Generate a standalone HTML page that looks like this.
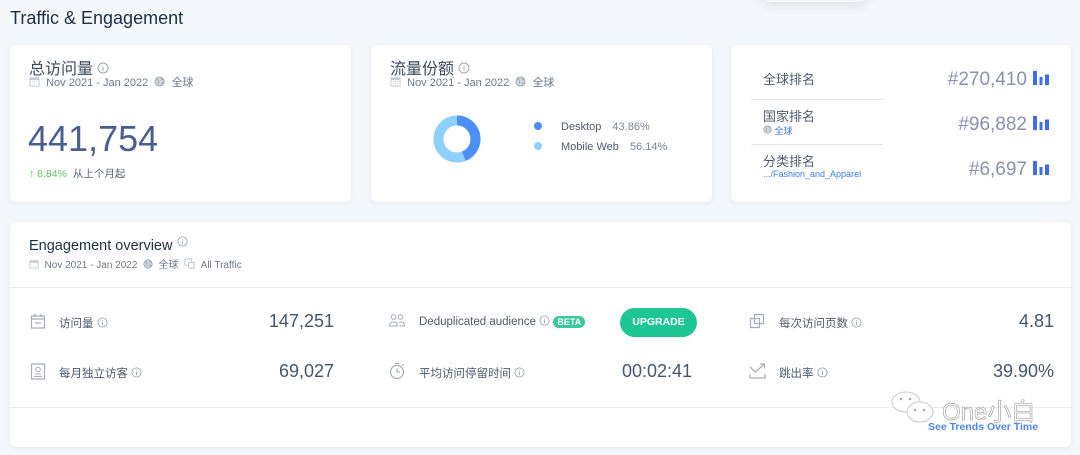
<!DOCTYPE html>
<html><head><meta charset="utf-8">
<style>
*{margin:0;padding:0;box-sizing:border-box}
body{width:1080px;height:455px;background:#f4f7fb;font-family:"Liberation Sans","Noto Sans CJK SC",sans-serif;position:relative;overflow:hidden;color:#2a3e52}
.a{position:absolute;white-space:nowrap}
.card{position:absolute;background:#fff;border-radius:6px;box-shadow:0 1px 4px rgba(40,60,90,.08)}
.t{font-size:16px;color:#3b4a5c}
.sub{font-size:11px;color:#6b7888}
.lbl{font-size:11.5px;color:#4d5b6c}
.val{font-size:18px;color:#44566e}
.rk{font-size:19px;color:#8a91ae}
a{color:#3d7bf0}
</style></head><body>
<div class="a" style="left:760px;top:-20px;width:110px;height:22px;border-radius:12px;box-shadow:0 4px 10px rgba(0,0,0,.08);background:#f4f7fb"></div>
<div class="a" style="left:10px;top:8px;font-size:18px;color:#1e2f45">Traffic &amp; Engagement</div>

<svg width="0" height="0" style="position:absolute">
<defs>
<symbol id="cal" viewBox="0 0 12 12"><rect x="1" y="2" width="10" height="9" fill="none" stroke="#c3c9d2"/><rect x="1" y="2" width="10" height="2.5" fill="#c3c9d2"/><path d="M3 6h1M5.5 6h1M8 6h1M3 8.5h1M5.5 8.5h1M8 8.5h1" stroke="#c3c9d2"/></symbol>
<symbol id="glb" viewBox="0 0 12 12"><circle cx="6" cy="6" r="5" fill="#fff" stroke="#9aa3ae"/><path d="M3 3.5c1.5 0 2 1 1.5 2s1 1.5.5 3M8 2.5c-.5 1 .5 1.5 1.5 1.5M7.5 7.5c.5.5 1.5.5 2 0" stroke="#9aa3ae" fill="none"/><circle cx="6" cy="6" r="5" fill="#9aa3ae" opacity=".45"/></symbol>
<symbol id="inf" viewBox="0 0 12 12"><circle cx="6" cy="6" r="5" fill="none" stroke="#a2a9b3"/><path d="M6 5v4M6 3.2v.8" stroke="#a2a9b3"/></symbol>
<symbol id="bar" viewBox="0 0 18 14"><rect x="1" y="0" width="4" height="14" fill="#3d6cf0"/><rect x="7.5" y="6" width="3" height="8" fill="#3d6cf0"/><rect x="13" y="3.5" width="4" height="10.5" fill="#3d6cf0"/></symbol>
</defs></svg>

<div class="card" style="left:10px;top:45px;width:341px;height:157px">
<div class="a t" style="left:19px;top:10px">总访问量 <svg width="12" height="12" style="vertical-align:0"><use href="#inf"/></svg></div>
<div class="a sub" style="left:19px;top:29px"><svg width="11" height="11" style="vertical-align:-1px"><use href="#cal"/></svg>&nbsp; Nov 2021 - Jan 2022 &nbsp;<svg width="11" height="11" style="vertical-align:-1px"><use href="#glb"/></svg>&nbsp; 全球</div>
<div class="a" style="left:18px;top:73px;font-size:36px;color:#4a5d90">441,754</div>
<div class="a" style="left:19px;top:121px;font-size:10.5px;color:#5dc05d">↑ 8.84% <span style="color:#5a6675;margin-left:3px">从上个月起</span></div>
</div>

<div class="card" style="left:371px;top:45px;width:341px;height:157px">
<div class="a t" style="left:19px;top:10px">流量份额 <svg width="12" height="12"><use href="#inf"/></svg></div>
<div class="a sub" style="left:19px;top:29px"><svg width="11" height="11" style="vertical-align:-1px"><use href="#cal"/></svg>&nbsp; Nov 2021 - Jan 2022 &nbsp;<svg width="11" height="11" style="vertical-align:-1px"><use href="#glb"/></svg>&nbsp; 全球</div>
<svg class="a" style="left:62px;top:70px" width="48" height="48" viewBox="0 0 48 48">
<circle cx="24" cy="24" r="18.5" fill="none" stroke="#8ed0fd" stroke-width="10"/>
<circle cx="24" cy="24" r="18.5" fill="none" stroke="#4e8ff7" stroke-width="10" stroke-dasharray="50.98 200" transform="rotate(-90 24 24)"/>
</svg>
<div class="a" style="left:163px;top:77px;width:8px;height:8px;border-radius:50%;background:#4e8ff7"></div>
<div class="a" style="left:163px;top:97px;width:8px;height:8px;border-radius:50%;background:#8ed0fd"></div>
<div class="a" style="left:190px;top:76px;font-size:11px;color:#4d5b6c">Desktop <span style="color:#7b8794;margin-left:8px">43.86%</span></div>
<div class="a" style="left:190px;top:96px;font-size:11px;color:#4d5b6c">Mobile Web <span style="color:#7b8794;margin-left:8px">56.14%</span></div>
</div>

<div class="card" style="left:731px;top:45px;width:340px;height:157px">
<div class="a" style="left:32px;top:24px;font-size:13px;color:#4d5b6c">全球排名</div>
<div class="a" style="left:20px;top:54px;width:132px;height:1px;background:#e2e6ec"></div>
<div class="a" style="left:32px;top:61px;font-size:13px;color:#4d5b6c">国家排名</div>
<div class="a" style="left:32px;top:79px;font-size:9px"><svg width="9" height="9"><use href="#glb"/></svg> <a>全球</a></div>
<div class="a" style="left:20px;top:99px;width:132px;height:1px;background:#e2e6ec"></div>
<div class="a" style="left:32px;top:106px;font-size:13px;color:#4d5b6c">分类排名</div>
<div class="a" style="left:32px;top:124px;font-size:9px"><a>.../Fashion_and_Apparel</a></div>
<div class="a rk" style="right:44px;top:24px">#270,410</div>
<div class="a rk" style="right:44px;top:69px">#96,882</div>
<div class="a rk" style="right:44px;top:114px">#6,697</div>
<svg class="a" style="left:301px;top:26px" width="18" height="14"><use href="#bar"/></svg>
<svg class="a" style="left:301px;top:71px" width="18" height="14"><use href="#bar"/></svg>
<svg class="a" style="left:301px;top:116px" width="18" height="14"><use href="#bar"/></svg>
</div>

<div class="card" style="left:10px;top:222px;width:1061px;height:225px">
<div class="a" style="left:19px;top:14px;font-size:14.5px;color:#1e2f45">Engagement overview <svg width="11" height="11" style="vertical-align:3px"><use href="#inf"/></svg></div>
<div class="a" style="left:19px;top:34px;font-size:10px;color:#6b7888"><svg width="10" height="10" style="vertical-align:-1px"><use href="#cal"/></svg>&nbsp; Nov 2021 - Jan 2022 &nbsp;<svg width="10" height="10" style="vertical-align:-1px"><use href="#glb"/></svg>&nbsp; 全球 &nbsp;<svg width="11" height="11" viewBox="0 0 12 12" style="vertical-align:-1px"><path d="M1 1h7v3M1 1v7h3M5 5h6v6H5z" fill="none" stroke="#b6bdc6"/></svg>&nbsp; All Traffic</div>
<div class="a" style="left:0;top:65px;width:1061px;height:1px;background:#e8ebef"></div>
<div class="a" style="left:0;top:185px;width:1061px;height:1px;background:#e8ebef"></div>

<svg class="a" style="left:20px;top:91px" width="16" height="16" viewBox="0 0 16 16"><path d="M1.5 3h13v12h-13zM1.5 6h13M5 1v3M11 1v3M5 10h6" fill="none" stroke="#a4adb8" stroke-width="1.2"/></svg>
<div class="a lbl" style="left:49px;top:93px">访问量 <svg width="11" height="11" style="vertical-align:-1px"><use href="#inf"/></svg></div>
<div class="a val" style="right:737px;top:89px">147,251</div>

<svg class="a" style="left:379px;top:92px" width="16" height="14" viewBox="0 0 16 14"><circle cx="4.5" cy="3" r="2.3" fill="none" stroke="#a4adb8"/><circle cx="11.5" cy="3" r="2.3" fill="none" stroke="#a4adb8"/><path d="M.5 12c0-3 2-4 4-4s4 1 4 4zM9.5 8.5c.6-.3 1.2-.5 2-.5 2 0 4 1 4 4h-5" fill="none" stroke="#a4adb8"/></svg>
<div class="a lbl" style="left:409px;top:93px">Deduplicated audience <svg width="11" height="11" style="vertical-align:-1px"><use href="#inf"/></svg> <span style="background:#3ac89c;color:#fff;font-size:9px;font-weight:bold;border-radius:7px;padding:1px 4px">BETA</span></div>
<div class="a" style="left:610px;top:86px;width:77px;height:29px;border-radius:15px;background:#1fc695;color:#fff;font-size:10.5px;font-weight:bold;text-align:center;line-height:29px">UPGRADE</div>

<svg class="a" style="left:739px;top:91px" width="16" height="16" viewBox="0 0 16 16"><path d="M5.5 1.5h9v9h-9zM1.5 5.5h9v9h-9z" fill="none" stroke="#a4adb8" stroke-width="1.2"/></svg>
<div class="a lbl" style="left:769px;top:93px">每次访问页数 <svg width="11" height="11" style="vertical-align:-1px"><use href="#inf"/></svg></div>
<div class="a val" style="right:17px;top:89px">4.81</div>

<svg class="a" style="left:20px;top:141px" width="16" height="17" viewBox="0 0 16 17"><rect x="1.5" y="1" width="13" height="15" fill="none" stroke="#a4adb8" stroke-width="1.2"/><circle cx="8" cy="6.5" r="2.3" fill="none" stroke="#a4adb8"/><path d="M4 13.5h8M5 11h6" stroke="#a4adb8"/></svg>
<div class="a lbl" style="left:49px;top:143px">每月独立访客 <svg width="11" height="11" style="vertical-align:-1px"><use href="#inf"/></svg></div>
<div class="a val" style="right:737px;top:139px">69,027</div>

<svg class="a" style="left:379px;top:140px" width="17" height="18" viewBox="0 0 17 18"><circle cx="8" cy="10" r="6.5" fill="none" stroke="#a4adb8" stroke-width="1.2"/><path d="M6 1.5h4M8 6.5v3.5h3M13 3.5l1.5-1.5" fill="none" stroke="#a4adb8" stroke-width="1.2"/></svg>
<div class="a lbl" style="left:409px;top:143px">平均访问停留时间 <svg width="11" height="11" style="vertical-align:-1px"><use href="#inf"/></svg></div>
<div class="a val" style="left:612px;top:139px">00:02:41</div>

<svg class="a" style="left:739px;top:141px" width="17" height="16" viewBox="0 0 17 16"><path d="M1 4l5.5 5 9-8M11 1h4.5v4.5M1 11v4h15v-4" fill="none" stroke="#a4adb8" stroke-width="1.2"/></svg>
<div class="a lbl" style="left:769px;top:143px">跳出率 <svg width="11" height="11" style="vertical-align:-1px"><use href="#inf"/></svg></div>
<div class="a val" style="right:17px;top:139px">39.90%</div>

<svg class="a" style="left:880px;top:168px" width="50" height="40" viewBox="0 0 50 40"><ellipse cx="16" cy="12" rx="14" ry="10" fill="#fff" stroke="#c6c9cd"/><ellipse cx="30" cy="22" rx="13" ry="10" fill="#fff" stroke="#c6c9cd"/><circle cx="25" cy="20" r="1.3" fill="#aaa"/><circle cx="34" cy="20" r="1.3" fill="#aaa"/><circle cx="11" cy="9" r="1.3" fill="#aaa"/><circle cx="20" cy="9" r="1.3" fill="#aaa"/></svg>
<div class="a" style="left:932px;top:170px;font-size:24px;-webkit-text-stroke:0.5px #888;color:#fff">One小白</div>
<div class="a" style="left:918px;top:199px;font-size:10.5px;color:#4f86f0;font-weight:bold">See Trends Over Time</div>
</div>
</body></html>
